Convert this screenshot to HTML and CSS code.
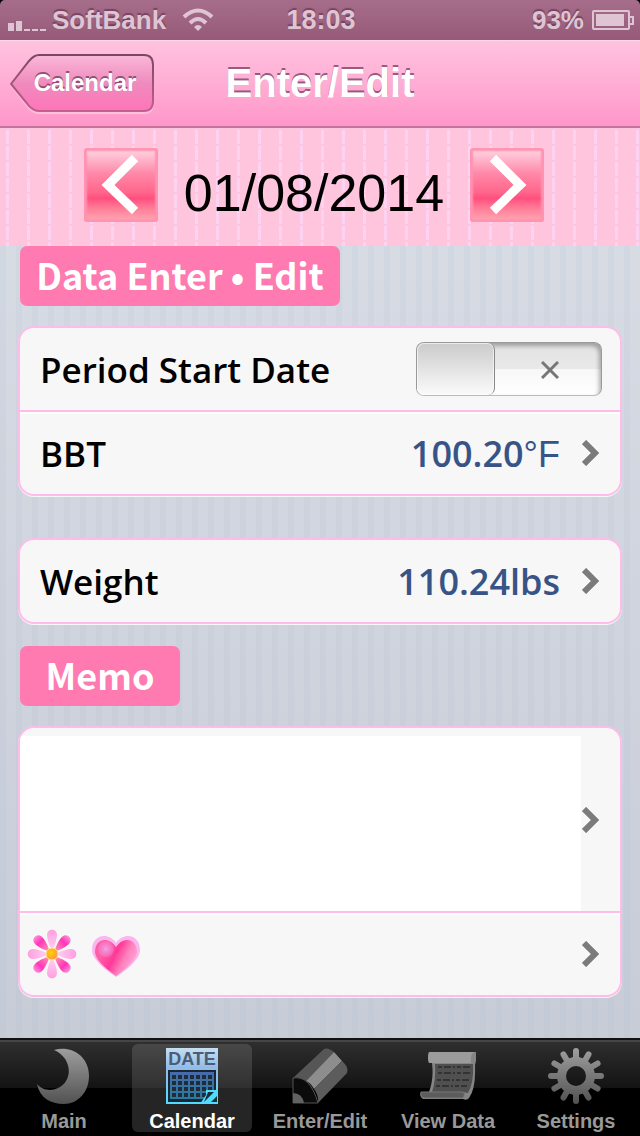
FILE: index.html
```
<!DOCTYPE html>
<html lang="en">
<head>
    <meta charset="UTF-8">
    <meta name="viewport" content="width=device-width, initial-scale=1.0">
    <title>Enter/Edit</title>
    <link rel="stylesheet" href="styles.css">
</head>
<body>
    <div class="status-bar">
        <div class="carrier">
            <svg class="signal" width="39" height="12" viewBox="0 0 39 12" fill="currentColor">
                <path d="M0 4h6v8H0zM8 2h6v10H8zM16 10h6v2h-6zM24 10h6v2h-6zM32 10h6v2h-6z"/>
            </svg>
            <span>SoftBank</span>
            <svg class="wifi" width="32" height="24" viewBox="0 0 32 24" fill="none" stroke="currentColor" stroke-width="4">
                <path d="M2 9Q16-4 30 9M8 15Q16 7 24 15"/>
                <path d="M16 23l-4-4q4-4 8 0z" fill="currentColor" stroke="none"/>
            </svg>
        </div>
        <div class="time">18:03</div>
        <div class="battery">
            <span>93%</span>
            <svg width="42" height="20" viewBox="0 0 42 20" fill="none" stroke="currentColor" stroke-width="2">
                <rect x="1" y="1" width="36" height="18" rx="1"/>
                <path d="M38 7h3v7h-3"/>
                <rect x="4" y="4" width="28" height="12" fill="currentColor" stroke="none"/>
            </svg>
        </div>
    </div>

    <header class="nav-bar">
        <button class="back">
            <svg width="146" height="60" viewBox="0 0 146 60">
                <defs>
                    <linearGradient id="backFill" x1="0" y1="0" x2="0" y2="1">
                        <stop offset="0" stop-color="#fab8d9"/>
                        <stop offset="0.5" stop-color="#ef8bbd"/>
                        <stop offset="1" stop-color="#ff74b9"/>
                    </linearGradient>
                    <linearGradient id="backLine" x1="0" y1="0" x2="0" y2="1">
                        <stop offset="0" stop-color="#7a4862"/>
                        <stop offset="1" stop-color="#c4608f"/>
                    </linearGradient>
                </defs>
                <path d="M1 31L19 8Q24 3 29 3H134Q143 3 143 13V49Q143 59 134 59H29Q24 59 19 54Z" fill="none" stroke="#ffc0dd" stroke-width="2"/>
                <path d="M1 30L19 7Q24 1 29 1H134Q143 1 143 11V47Q143 57 134 57H29Q24 57 19 52Z" fill="url(#backFill)" stroke="url(#backLine)" stroke-width="2"/>
            </svg>
            <span>Calendar</span>
        </button>
        <h1>Enter/Edit</h1>
    </header>

    <div class="date-bar">
        <button class="arrow" aria-label="Previous day">
            <svg width="74" height="74" viewBox="0 0 74 74" fill="none" stroke="#fff" stroke-width="9">
                <path d="M51 10L24 37L51 63"/>
            </svg>
        </button>
        <span class="date">01/08/2014</span>
        <button class="arrow" aria-label="Next day">
            <svg width="74" height="74" viewBox="0 0 74 74" fill="none" stroke="#fff" stroke-width="9">
                <path d="M23 10L50 37L23 63"/>
            </svg>
        </button>
    </div>

    <main>
        <h2 class="badge">Data Enter • Edit</h2>

        <div class="card">
            <div class="row">
                <label for="period">Period Start Date</label>
                <span class="switch">
                    <input type="checkbox" id="period">
                    <svg width="18" height="18" viewBox="0 0 18 18" fill="none" stroke="#777" stroke-width="3">
                        <path d="M1 1L17 17M17 1L1 17"/>
                    </svg>
                </span>
            </div>
            <button class="row">
                <span>BBT</span>
                <span class="value">100.20<span class="unit">°F</span></span>
                <svg class="chevron" viewBox="0 0 18 26"><path d="M2 2L13 13L2 24"/></svg>
            </button>
        </div>

        <div class="card">
            <button class="row">
                <span>Weight</span>
                <span class="value">110.24lbs</span>
                <svg class="chevron" viewBox="0 0 18 26"><path d="M2 2L13 13L2 24"/></svg>
            </button>
        </div>

        <h2 class="badge memo-badge">Memo</h2>

        <div class="card">
            <div class="row memo">
                <textarea aria-label="Memo"></textarea>
                <button class="open" aria-label="Edit memo">
                    <svg class="chevron" viewBox="0 0 18 26"><path d="M2 2L13 13L2 24"/></svg>
                </button>
            </div>
            <button class="row icons" aria-label="Choose icons">
                <svg width="50" height="50" viewBox="-25 -25 50 50">
                    <defs>
                        <linearGradient id="petalLight" x1="0" y1="0" x2="0" y2="1">
                            <stop offset="0" stop-color="#ff9fe0"/>
                            <stop offset="1" stop-color="#ffd3f4"/>
                        </linearGradient>
                        <linearGradient id="petalDark" x1="0" y1="0" x2="0" y2="1">
                            <stop offset="0" stop-color="#ff8fd8"/>
                            <stop offset="0.35" stop-color="#ff35bb"/>
                            <stop offset="1" stop-color="#ffa0ac"/>
                        </linearGradient>
                        <path id="petal" d="M0-3C-3-9-5-15-5-19C-5-26 5-26 5-19C5-15 3-9 0-3Z"/>
                        <radialGradient id="pollen" cx="0.4" cy="0.4">
                            <stop offset="0" stop-color="#ffd400"/>
                            <stop offset="1" stop-color="#ff9f3a"/>
                        </radialGradient>
                    </defs>
                    <g fill="url(#petalDark)">
                        <use href="#petal" transform="rotate(45)"/>
                        <use href="#petal" transform="rotate(135)"/>
                        <use href="#petal" transform="rotate(225)"/>
                        <use href="#petal" transform="rotate(315)"/>
                    </g>
                    <g fill="url(#petalLight)">
                        <use href="#petal"/>
                        <use href="#petal" transform="rotate(90)"/>
                        <use href="#petal" transform="rotate(180)"/>
                        <use href="#petal" transform="rotate(270)"/>
                    </g>
                    <circle r="6" fill="url(#pollen)" stroke="#ffe98c"/>
                </svg>
                <svg width="50" height="50" viewBox="0 -5 50 50">
                    <defs>
                        <linearGradient id="heartFill" x1="0.2" y1="0.3" x2="0.9" y2="0.6">
                            <stop offset="0" stop-color="#ff5da8"/>
                            <stop offset="0.4" stop-color="#ff3a98"/>
                            <stop offset="0.75" stop-color="#ff84be"/>
                            <stop offset="1" stop-color="#ff9fd2"/>
                        </linearGradient>
                        <radialGradient id="heartShine">
                            <stop offset="0" stop-color="#f2a0e8"/>
                            <stop offset="1" stop-color="#f27fc8" stop-opacity="0.5"/>
                        </radialGradient>
                    </defs>
                    <path d="M25 43Q1 27 1 16C1 0 18-2 25 9C32-2 49 0 49 16Q49 27 25 43Z" fill="#fcb6ef"/>
                    <path d="M25 42Q4 27 4 18C4 4 18 2 25 13C32 2 46 4 46 18Q46 27 25 42Z" fill="url(#heartFill)"/>
                    <circle cx="15" cy="15" r="8" fill="url(#heartShine)"/>
                </svg>
                <svg class="chevron" viewBox="0 0 18 26"><path d="M2 2L13 13L2 24"/></svg>
            </button>
        </div>
    </main>

    <nav class="tab-bar">
        <a href="#main">
            <svg width="56" height="58" viewBox="0 0 56 58">
                <defs>
                    <linearGradient id="steel" x1="0" y1="0" x2="0" y2="58" gradientUnits="userSpaceOnUse">
                        <stop offset="0" stop-color="#a0a0a0"/>
                        <stop offset="1" stop-color="#505050"/>
                    </linearGradient>
                </defs>
                <path d="M18 3C34-2 53 8 53 29C53 45 42 57 28 57C14 57 4 51 1 37C7 44 16 44 22 41C37 35 37 11 18 3Z" fill="url(#steel)"/>
            </svg>
            Main
        </a>
        <a href="#calendar" class="active">
            <svg width="56" height="58" viewBox="0 0 56 58">
                <defs>
                    <linearGradient id="sky" x1="0" y1="0" x2="0" y2="1">
                        <stop offset="0" stop-color="#c6dff0"/>
                        <stop offset="0.35" stop-color="#91bce9"/>
                        <stop offset="1" stop-color="#50dcff"/>
                    </linearGradient>
                    <linearGradient id="sea" x1="0" y1="0" x2="0" y2="1">
                        <stop offset="0" stop-color="#466bab"/>
                        <stop offset="1" stop-color="#277c9f"/>
                    </linearGradient>
                    <pattern id="days" x="8" y="28" width="6" height="6" patternUnits="userSpaceOnUse">
                        <rect width="4" height="4" fill="#222c38"/>
                    </pattern>
                </defs>
                <rect x="2" y="1" width="52" height="56" fill="url(#sky)"/>
                <rect x="4" y="23" width="48" height="32" fill="#1c2530"/>
                <rect x="6" y="25" width="44" height="27" fill="url(#sea)"/>
                <rect x="8" y="28" width="40" height="22" fill="url(#days)"/>
                <path d="M54 43H42V48L36 57H54Z" fill="#50dcff"/>
                <path d="M44 45H50L40 55ZM53 49V55H47Z" fill="#17303d"/>
                <text x="28" y="18" text-anchor="middle" class="date-glyph">DATE</text>
            </svg>
            Calendar
        </a>
        <a href="#edit">
            <svg width="56" height="58" viewBox="0 0 56 58">
                <path d="M1 31L32 2Q36 0 42 5L14 34Q8 29 1 31Z" fill="#565656"/>
                <path d="M14 34L42 5L50 14L22 42Q19 36 14 34Z" fill="#8d8d8d"/>
                <path d="M22 42L50 14Q57 20 55 26L26 56Q27 49 22 42Z" fill="#5c5c5c"/>
                <path d="M1 31Q18 28 26 56H1Z" fill="#0b0b0b" stroke="#555"/>
                <path d="M1 46Q10 46 12 56H1Z" fill="#626262"/>
            </svg>
            Enter/Edit
        </a>
        <a href="#view">
            <svg width="56" height="58" viewBox="0 0 56 58">
                <path d="M9 5H56Q58 6 55 18Q56 42 49 51Q47 54 43 52H3Q-1 50 1 45H9Q14 32 12 16H9Q7 11 9 5Z" fill="#858585"/>
                <path d="M15 17H53Q54 36 48 46L42 45H12Q16 33 15 17Z" fill="#505050"/>
                <path d="M18 20H50M18 26H50M17 33H49M16 39H47" stroke="#333" stroke-width="2" stroke-dasharray="4 2 7 2 2 2"/>
                <path d="M9 5H54Q50 7 51 16H9Q7 11 9 5Z" fill="#9b9b9b"/>
                <path d="M1 45H42Q46 45 43 51H4Q0 50 1 45Z" fill="#5c5c5c" stroke="#777"/>
            </svg>
            View Data
        </a>
        <a href="#settings">
            <svg width="56" height="58" viewBox="0 0 56 58">
                <mask id="gear">
                    <g stroke="#fff" stroke-width="6" stroke-linecap="round">
                        <path d="M28 4V54M3 29H53M15.5 7.4L40.5 50.6M40.5 7.4L15.5 50.6M6.4 16.5L49.6 41.5M49.6 16.5L6.4 41.5"/>
                    </g>
                    <circle cx="28" cy="29" r="19" fill="#fff"/>
                    <circle cx="28" cy="29" r="10" fill="#000"/>
                </mask>
                <rect width="56" height="58" fill="url(#steel)" mask="url(#gear)"/>
            </svg>
            Settings
        </a>
    </nav>
</body>
</html>
```
FILE: styles.css
```
* {
    box-sizing: border-box;
}
body {
    margin: 0;
    min-height: 100vh;
    display: flex;
    flex-direction: column;
    background: #000;
    font-family: "Liberation Sans", Arial, sans-serif;
}
button {
    border: none;
    padding: 0;
    background: none;
    font: inherit;
    color: inherit;
    cursor: pointer;
}
svg {
    display: block;
    flex: none;
}

/* status bar */
.status-bar {
    height: 40px;
    padding: 0 6px 0 8px;
    display: grid;
    grid-template-columns: 1fr auto 1fr;
    align-items: center;
    border-radius: 5px 5px 0 0;
    background: linear-gradient(#a66e8b, #965a78);
    color: #dfc5d3;
    font-size: 26px;
    font-weight: bold;
    text-shadow: 0 -2px 1px rgba(80,30,60,0.5);
}
.carrier, .battery {
    display: flex;
    align-items: center;
    gap: 5px;
}
.signal {
    margin-top: 10px;
}
.wifi {
    margin-left: 11px;
}
.time {
    font-size: 27px;
}
.battery {
    justify-content: flex-end;
    gap: 8px;
}

/* navigation bar */
.nav-bar {
    height: 88px;
    padding: 0 10px;
    display: grid;
    grid-template-columns: 1fr auto 1fr;
    align-items: center;
    background: linear-gradient(#ffc3df, #ff97ca);
    border-top: 1px solid #ffd9eb;
    border-bottom: 2px solid #c6739b;
    color: #fff;
    text-shadow: 0 -2px 0 rgba(90,40,70,0.65);
}
.nav-bar h1 {
    margin: 0;
    font-size: 40px;
}
.back {
    position: relative;
    width: 146px;
    height: 60px;
    padding: 0 0 2px 4px;
    font-size: 24px;
    font-weight: bold;
    text-shadow: inherit;
}
.back svg {
    position: absolute;
    top: 0;
    left: 0;
}
.back span {
    position: relative;
}

/* date picker */
.date-bar {
    height: 118px;
    padding: 0 12px 4px 0;
    display: flex;
    justify-content: center;
    align-items: center;
    gap: 26px;
    background:
        repeating-linear-gradient(#ffc5dd 0 2px, transparent 2px 16px),
        repeating-linear-gradient(90deg, #ffc5dd 0 6px, #fdd2f2 6px 9px, #ffc5dd 9px 21px);
}
.date {
    padding-top: 16px;
    font-size: 52px;
    line-height: 58px;
}
.arrow {
    border-radius: 3px;
    background: linear-gradient(#ffd9e6, #ff87a8 35%, #ff668b 60%, #ff4f7e 68%, #ff7894 80%, #ffabb5);
    box-shadow: inset 0 0 2px 3px #ff93b1;
}

/* content */
main {
    flex: 1;
    padding: 0 18px 40px;
    background:
        repeating-linear-gradient(90deg, rgba(130,150,180,0.05) 0 6px, transparent 6px 16px),
        linear-gradient(#d6dbe4, #c7ccd7);
    font-family: "Open Sans", "Noto Sans", sans-serif;
}
.badge {
    width: 320px;
    height: 60px;
    margin: 0 0 20px 2px;
    border-radius: 7px;
    background: #ff7ab1;
    color: #fff;
    font-family: "Noto Sans CJK JP", "Noto Sans", sans-serif;
    font-size: 36px;
    line-height: 56px;
    text-align: center;
}
.memo-badge {
    width: 160px;
    margin-top: 22px;
}
.card {
    border: 2px solid #ffbce8;
    border-radius: 16px;
    background: #f7f7f7;
    box-shadow: 0 1px 0 rgba(255,255,255,0.8);
    overflow: hidden;
}
.card + .card {
    margin-top: 42px;
}
.row {
    width: 100%;
    height: 82px;
    padding: 0 18px 0 20px;
    display: flex;
    align-items: center;
    font-size: 35px;
    font-weight: 600;
    text-align: left;
}
.row + .row {
    height: 84px;
    border-top: 2px solid #ffbce8;
    box-shadow: inset 0 2px 0 #fff;
}
.value {
    margin-left: auto;
    color: #385487;
    font-size: 36px;
}
.unit {
    font-family: "Liberation Sans", Arial, sans-serif;
    font-weight: 400;
}
.chevron {
    width: 18px;
    height: 26px;
    margin: 0 2px 0 22px;
    fill: none;
    stroke: #7b7b7b;
    stroke-width: 6;
}
.switch {
    margin-left: auto;
    display: grid;
    align-items: center;
}
.switch input, .switch svg {
    grid-area: 1 / 1;
}
.switch svg {
    margin: 2px 0 0 125px;
    pointer-events: none;
}
.switch input {
    appearance: none;
    width: 186px;
    height: 54px;
    margin: 0;
    border: 1px solid #999;
    border-bottom-color: #bbb;
    border-radius: 8px;
    background: linear-gradient(#e2e2e2, #e9e9e9 50%, #f7f7f7 51%, #fff);
    box-shadow: inset -2px 3px 4px rgba(0,0,0,0.3);
}
.switch input::before {
    content: "";
    display: block;
    width: 77px;
    height: 52px;
    border-right: 1px solid #888;
    border-radius: 7px;
    background: linear-gradient(#cbcbcb, #fbfbfb);
    box-shadow: inset 0 0 0 1px rgba(255,255,255,0.6);
}
.switch input:checked::before {
    margin-left: auto;
}

/* memo */
.memo {
    height: 183px;
    padding: 8px 18px 0 0;
}
.memo textarea {
    flex: 1;
    align-self: stretch;
    border: none;
    padding: 10px 20px;
    background: #fff;
    font: inherit;
    resize: none;
    outline: none;
}
.open {
    padding-bottom: 8px;
}
.open .chevron {
    margin-left: 1px;
}
.icons {
    padding-left: 7px;
    gap: 14px;
}
.icons .chevron {
    margin-left: auto;
}

/* tab bar */
.tab-bar {
    height: 98px;
    display: flex;
    background: linear-gradient(#303030, #131313 48px, #000 48px);
    border-top: 2px solid #111;
    box-shadow: inset 0 2px 0 #454545;
}
.tab-bar a {
    flex: 1;
    margin: 4px;
    padding-top: 3px;
    display: flex;
    flex-direction: column;
    align-items: center;
    gap: 4px;
    border-radius: 6px;
    color: #999;
    font-size: 20px;
    line-height: 24px;
    font-weight: bold;
    text-decoration: none;
}
.tab-bar .active {
    background: linear-gradient(#484848, #303030 44px, #252525 44px);
    color: #fff;
}
.date-glyph {
    font-size: 18px;
    font-weight: bold;
    fill: #4a5c78;
}
```
